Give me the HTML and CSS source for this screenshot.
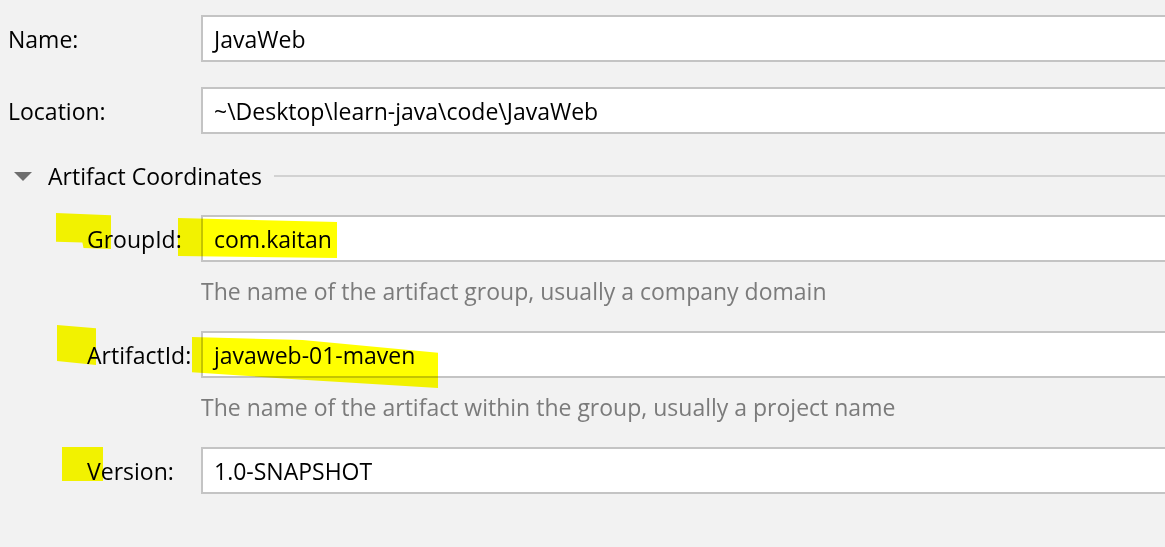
FILE: index.html
```html
<!DOCTYPE html>
<html lang="en">
<head>
<meta charset="utf-8">
<title>New Project</title>
<link rel="stylesheet" href="styles.css">
</head>
<body>
<div class="form">
  <div class="row">
    <label class="label">Name:</label>
    <div class="field">JavaWeb</div>
  </div>
  <div class="row row-loc">
    <label class="label">Location:</label>
    <div class="field">~\Desktop\learn-java\code\JavaWeb</div>
  </div>
  <div class="section-head">
    <span class="caret"></span>
    <span class="section-title">Artifact Coordinates</span>
    <span class="rule"></span>
  </div>
  <div class="section">
    <div class="row">
      <label class="label">GroupId:</label>
      <div class="field">com.kaitan</div>
    </div>
    <div class="hint">The name of the artifact group, usually a company domain</div>
    <div class="row">
      <label class="label">ArtifactId:</label>
      <div class="field">javaweb-01-maven</div>
    </div>
    <div class="hint">The name of the artifact within the group, usually a project name</div>
    <div class="row">
      <label class="label">Version:</label>
      <div class="field">1.0-SNAPSHOT</div>
    </div>
  </div>
</div>
<div class="mark m1"></div>
<div class="mark m2"></div>
<div class="mark m3"></div>
<div class="mark m4"></div>
<div class="mark m5"></div>
</body>
</html>
```

FILE: styles.css
```css
html, body {
  margin: 0;
  padding: 0;
}
body {
  background: #f2f2f2;
  font-family: "Open Sans", "Noto Sans", sans-serif;
  font-size: 23px;
  color: #000;
  width: 1165px;
  height: 547px;
  overflow: hidden;
  position: relative;
}
.form {
  padding-top: 15px;
}
.row {
  display: grid;
  grid-template-columns: 201px 1fr;
  align-items: center;
  margin-right: -20px;
}
.label {
  padding-left: 8px;
}
.section .label {
  padding-left: 87px;
}
.field {
  height: 47px;
  box-sizing: border-box;
  border: 2px solid #c4c4c4;
  background: #fff;
  padding-left: 11px;
  display: flex;
  align-items: center;
}
.row-loc {
  margin-top: 25px;
}
.section-head {
  display: flex;
  align-items: center;
  height: 30px;
  margin-top: 27px;
}
.caret {
  margin-left: 14px;
  width: 0;
  height: 0;
  border-left: 9px solid transparent;
  border-right: 9px solid transparent;
  border-top: 9px solid #6e6e6e;
}
.section-title {
  margin-left: 16px;
}
.rule {
  flex: 1;
  height: 2px;
  background: #d2d2d2;
  margin-left: 12px;
}
.section {
  margin-top: 24px;
}
.hint {
  padding-left: 201px;
  color: #7b7b7b;
  line-height: 30px;
  margin: 14px 0 25px;
}
.mark {
  position: absolute;
  background: #ffff00;
  mix-blend-mode: multiply;
}
.m1 {
  left: 56px;
  top: 213px;
  width: 55px;
  height: 36px;
  clip-path: polygon(0 0, 100% 6%, 100% 100%, 50% 97%, 48% 82%, 0 80%);
}
.m2 {
  left: 178px;
  top: 218px;
  width: 159px;
  height: 40px;
  clip-path: polygon(0 0, 100% 10%, 100% 100%, 0 95%);
}
.m3 {
  left: 57px;
  top: 325px;
  width: 39px;
  height: 40px;
  clip-path: polygon(0 0, 100% 8%, 100% 100%, 0 90%);
}
.m4 {
  left: 192px;
  top: 337px;
  width: 246px;
  height: 51px;
  clip-path: polygon(0 0, 45% 6%, 100% 31%, 100% 100%, 45% 84%, 0 69%);
}
.m5 {
  left: 62px;
  top: 447px;
  width: 41px;
  height: 34px;
}
```
